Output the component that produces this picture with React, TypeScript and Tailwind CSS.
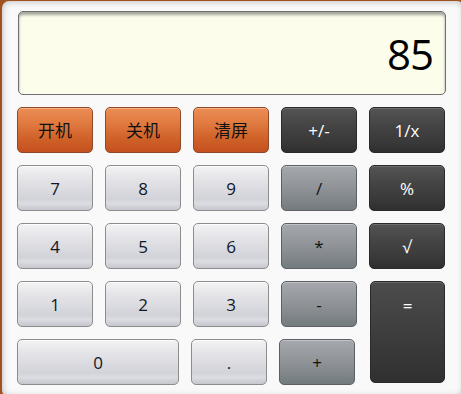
import React from "react";

const base =
  "flex items-center justify-center rounded-[5px] border text-[17px] leading-none select-none";
const light =
  base +
  " border-[#8c8c8c] text-[#101828] bg-[linear-gradient(to_bottom,#f3f3f5_0%,#e4e4e8_30%,#d2d3d9_75%,#dcdde2_85%,#c6c7ce_100%)] shadow-[inset_0_1px_0_rgba(255,255,255,0.8)]";
const orange =
  base +
  " border-[#8e4a28] text-[#111] bg-[linear-gradient(to_bottom,#ea8d55_0%,#e07a40_35%,#cf6128_70%,#c4501e_100%)] shadow-[inset_0_1px_0_rgba(255,200,160,0.6)]";
const dark =
  base +
  " border-[#2a2a2a] text-white bg-[linear-gradient(to_bottom,#545454_0%,#444444_40%,#383838_80%,#2e2e2e_100%)] shadow-[inset_0_1px_0_rgba(255,255,255,0.15)]";
const mid =
  base +
  " border-[#5c6064] text-[#111] bg-[linear-gradient(to_bottom,#a5a8ac_0%,#8f9397_50%,#737b7f_100%)] shadow-[inset_0_1px_0_rgba(255,255,255,0.3)]";

const font = { fontFamily: '"Open Sans", "Noto Sans", "Noto Sans CJK SC", sans-serif' };

export default function App() {
  return (
    <div className="w-[461px] h-[394px] bg-[#a0521e] pl-[2px] pt-[1px] overflow-hidden" style={font}>
      <div className="w-[462px] h-[396px] bg-[#f9f9f9] rounded-[7px] shadow-[inset_0_0_7px_rgba(0,0,0,0.28)] pl-[15px] pt-[10px]">
        <div className="ml-[1px] w-[428px] h-[84px] rounded-[5px] border border-[#6e6e6e] bg-[#fdfdeb] shadow-[inset_0_3px_3px_rgba(0,0,0,0.35)] flex items-center justify-end pr-[12px] pt-[2px]">
          <span className="text-[42px] leading-none text-black tracking-[-1px]" style={{ fontFamily: '"Open Sans", sans-serif' }}>
            85
          </span>
        </div>
        <div className="mt-[12px] grid grid-cols-[repeat(5,76px)] auto-rows-[46px] gap-x-[12px] gap-y-[12px]">
          <button className={orange}>开机</button>
          <button className={orange}>关机</button>
          <button className={orange}>清屏</button>
          <button className={dark}>+/-</button>
          <button className={dark}>1/x</button>

          <button className={light}>7</button>
          <button className={light}>8</button>
          <button className={light}>9</button>
          <button className={mid}>/</button>
          <button className={dark}>%</button>

          <button className={light}>4</button>
          <button className={light}>5</button>
          <button className={light}>6</button>
          <button className={mid}>*</button>
          <button className={dark}>√</button>

          <button className={light}>1</button>
          <button className={light}>2</button>
          <button className={light}>3</button>
          <button className={mid}>-</button>
          <button
            className={
              "col-start-5 row-start-4 row-span-2 self-start h-[102px] ml-[1px] rounded-[5px] border border-[#2a2a2a] text-white text-[17px] leading-none flex justify-center pt-[15px] bg-[linear-gradient(to_bottom,#4c4c4c_0%,#3e3e3e_50%,#303030_100%)] shadow-[inset_0_1px_0_rgba(255,255,255,0.15)]"
            }
          >
            =
          </button>

          <div className="col-span-4 row-start-5 flex gap-[12px]">
            <button className={light + " w-[162px]"}>0</button>
            <button className={light + " w-[76px]"}>.</button>
            <button className={mid + " w-[76px]"}>+</button>
          </div>
        </div>
      </div>
    </div>
  );
}
